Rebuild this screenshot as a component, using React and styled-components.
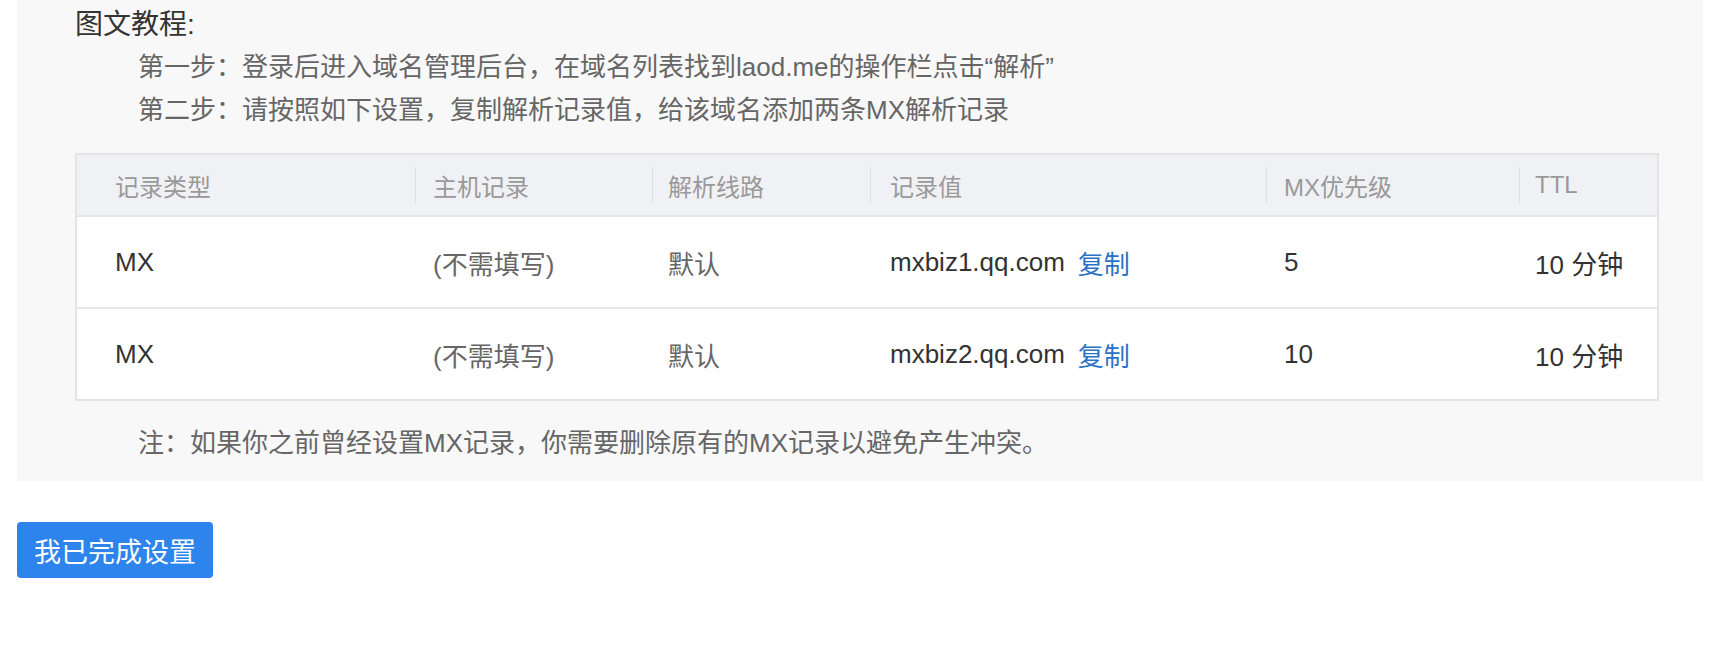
import React from 'react';
import styled, { createGlobalStyle } from 'styled-components';

const GlobalStyle = createGlobalStyle`
  html, body {
    margin: 0;
    padding: 0;
    background: #ffffff;
  }
  body {
    font-family: 'Liberation Sans', 'Noto Sans CJK SC', sans-serif;
  }
`;

const Page = styled.div`
  padding: 0 9px 0 17px;
`;

const Guide = styled.div`
  background: #f8f8f8;
  padding: 3px 44px 16px 58px;
`;

const Title = styled.div`
  font-size: 28px;
  line-height: 43px;
  color: #333;
`;

const Line = styled.div`
  font-size: 26px;
  line-height: 43px;
  color: #666;
  padding-left: 63px;
`;

const Table = styled.div`
  margin: 21px 0 21px;
  border: 2px solid #e4e4e4;
  background: #fff;
`;

const Row = styled.div`
  display: grid;
  grid-template-columns: 338px 237px 218px 396px 253px 1fr;
  height: ${(p) => (p.head ? '60px' : '90px')};
  background: ${(p) => (p.head ? '#f0f1f4' : '#fff')};
  border-bottom: ${(p) => (p.last ? 'none' : '2px solid #e6e6e6')};
`;

const HeadCell = styled.div`
  position: relative;
  display: flex;
  align-items: center;
  padding-left: ${(p) => p.pad}px;
  font-size: 24px;
  color: #999;

  &::before {
    content: '';
    display: ${(p) => (p.sep ? 'block' : 'none')};
    position: absolute;
    left: 0;
    top: 12px;
    bottom: 12px;
    width: 1px;
    background: #dedfe2;
  }
`;

const Cell = styled.div`
  display: flex;
  align-items: center;
  padding-left: ${(p) => p.pad}px;
  font-size: 26px;
  color: ${(p) => (p.muted ? '#666' : '#333')};
`;

const CopyLink = styled.a`
  color: #2a72c8;
  margin-left: 13px;
  cursor: pointer;
  text-decoration: none;
`;

const DoneButton = styled.button`
  margin-top: 41px;
  height: 56px;
  padding: 0 17px;
  border: none;
  border-radius: 4px;
  background: #2c84ec;
  color: #fff;
  font-family: 'Liberation Sans', 'Noto Sans CJK SC', sans-serif;
  font-size: 27px;
  cursor: pointer;
`;

const pads = [38, 18, 16, 20, 18, 16];
const heads = ['记录类型', '主机记录', '解析线路', '记录值', 'MX优先级', 'TTL'];

const records = [
  { value: 'mxbiz1.qq.com', priority: '5' },
  { value: 'mxbiz2.qq.com', priority: '10' },
];

const App = () => (
  <Page>
    <GlobalStyle />
    <Guide>
      <Title>图文教程:</Title>
      <Line>第一步：登录后进入域名管理后台，在域名列表找到laod.me的操作栏点击“解析”</Line>
      <Line>第二步：请按照如下设置，复制解析记录值，给该域名添加两条MX解析记录</Line>
      <Table>
        <Row head>
          {heads.map((h, i) => (
            <HeadCell key={h} pad={pads[i]} sep={i > 0}>
              {h}
            </HeadCell>
          ))}
        </Row>
        {records.map((r, i) => (
          <Row key={r.value} last={i === records.length - 1}>
            <Cell pad={pads[0]}>MX</Cell>
            <Cell pad={pads[1]} muted>(不需填写)</Cell>
            <Cell pad={pads[2]} muted>默认</Cell>
            <Cell pad={pads[3]}>
              {r.value}
              <CopyLink>复制</CopyLink>
            </Cell>
            <Cell pad={pads[4]}>{r.priority}</Cell>
            <Cell pad={pads[5]}>10 分钟</Cell>
          </Row>
        ))}
      </Table>
      <Line>注：如果你之前曾经设置MX记录，你需要删除原有的MX记录以避免产生冲突。</Line>
    </Guide>
    <DoneButton>我已完成设置</DoneButton>
  </Page>
);

export default App;
